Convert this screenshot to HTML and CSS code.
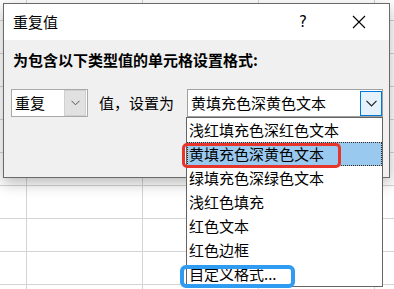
FILE: index.html
```html
<!DOCTYPE html>
<html lang="zh-CN">
<head>
<meta charset="utf-8">
<link rel="stylesheet" href="styles.css">
</head>
<body>
<div class="sheet"></div>
<div class="dialog">
  <div class="titlebar">
    <div class="title">重复值</div>
    <div class="spacer"></div>
    <div class="tbtn help">?</div>
    <div class="tbtn close">
      <svg width="14" height="14" viewBox="0 0 14 14"><path d="M1 1 L13 13 M13 1 L1 13" stroke="#000" stroke-width="1.1" fill="none"/></svg>
    </div>
  </div>
  <div class="content">
    <div class="label">为包含以下类型值的单元格设置格式:</div>
    <div class="row">
      <div class="select small">
        <span class="sel-text">重复</span>
        <span class="drop gray"><svg width="9" height="6" viewBox="0 0 9 6"><path d="M0.5 0.8 L4.5 4.8 L8.5 0.8" stroke="#555" stroke-width="1" fill="none"/></svg></span>
      </div>
      <div class="mid">值，设置为</div>
      <div class="select big">
        <span class="sel-text">黄填充色深黄色文本</span>
        <span class="drop blue"><svg width="11" height="7" viewBox="0 0 11 7"><path d="M0.5 0.8 L5.5 5.8 L10.5 0.8" stroke="#222" stroke-width="1.2" fill="none"/></svg></span>
      </div>
    </div>
  </div>
</div>
<div class="list">
  <div class="item">浅红填充色深红色文本</div>
  <div class="item sel">黄填充色深黄色文本</div>
  <div class="item">绿填充色深绿色文本</div>
  <div class="item">浅红色填充</div>
  <div class="item">红色文本</div>
  <div class="item">红色边框</div>
  <div class="item">自定义格式...</div>
</div>
<div class="mark red"></div>
<div class="mark blue"></div>
</body>
</html>
```
FILE: styles.css
```css
html, body {
  margin: 0;
  padding: 0;
}
body {
  width: 394px;
  height: 289px;
  overflow: hidden;
  position: relative;
  background: #fff;
  font-family: "Noto Sans CJK SC", "Noto Sans", sans-serif;
  font-size: 15px;
  color: #000;
}
.sheet {
  width: 394px;
  height: 289px;
  background-color: #fff;
  background-image:
    repeating-linear-gradient(to right, transparent 0, transparent 26px, #d4d4d4 26px, #d4d4d4 27px, transparent 27px, transparent 116px),
    repeating-linear-gradient(to bottom, transparent 0, transparent 20px, #d4d4d4 20px, #d4d4d4 21px, transparent 21px, transparent 33px);
}
.dialog {
  position: absolute;
  left: 3px;
  top: 3px;
  width: 387px;
  height: 175px;
  box-sizing: border-box;
  border: 1px solid #6a6a6a;
  background: #f0f0f0;
  box-shadow: 0 5px 14px rgba(0,0,0,0.28);
  display: flex;
  flex-direction: column;
}
.titlebar {
  height: 36px;
  background: #fff;
  display: flex;
  align-items: center;
  padding-right: 2px;
}
.title {
  padding-left: 9px;
  line-height: 20px;
}
.spacer { flex: 1; }
.tbtn {
  width: 56px;
  height: 36px;
  display: flex;
  align-items: center;
  justify-content: center;
}
.help {
  font-family: "DejaVu Sans", sans-serif;
  font-size: 15px;
}
.content {
  padding-top: 10px;
}
.label {
  padding-left: 9px;
  font-weight: bold;
  line-height: 20px;
}
.row {
  margin-top: 19px;
  padding-left: 7px;
  display: flex;
  align-items: center;
}
.select {
  height: 28px;
  box-sizing: border-box;
  border: 1px solid #a9a9a9;
  background: #fff;
  display: flex;
  align-items: center;
}
.select.small { width: 77px; }
.select.big { width: 196px; border-color: #a0a0a0; }
.sel-text {
  flex: 1;
  padding-left: 3px;
  line-height: 20px;
  white-space: nowrap;
}
.select.big .sel-text { padding-left: 3px; }
.drop {
  box-sizing: border-box;
  display: flex;
  align-items: center;
  justify-content: center;
}
.drop.gray {
  width: 22px;
  height: 26px;
  margin-right: 1px;
  background: #e1e1e1;
  border: 1px solid #d0d0d0;
}
.drop.blue {
  width: 22px;
  height: 25px;
  margin-right: 0px;
  background: #e5f1fb;
  border: 1px solid #0078d7;
}
.mid {
  margin-left: 11px;
  margin-right: 11px;
  width: 77px;
  line-height: 20px;
  white-space: nowrap;
}
.list {
  position: absolute;
  left: 186px;
  top: 117px;
  width: 197px;
  height: 170px;
  box-sizing: border-box;
  border: 1px solid #646464;
  background: #fff;
}
.item {
  height: 24px;
  line-height: 24px;
  padding-left: 2px;
  white-space: nowrap;
  box-sizing: border-box;
}
.item.sel {
  background: #99c9ef;
  border: 1px dotted #3a2a20;
  padding-left: 1px;
  line-height: 22px;
}
.mark {
  position: absolute;
  box-sizing: border-box;
}
.mark.red {
  left: 182px;
  top: 143px;
  width: 159px;
  height: 25px;
  border: 3px solid #e8352b;
  border-radius: 5px;
}
.mark.blue {
  left: 180px;
  top: 265px;
  width: 115px;
  height: 23px;
  border: 4px solid #2f9cf2;
  border-radius: 6px;
}
```
